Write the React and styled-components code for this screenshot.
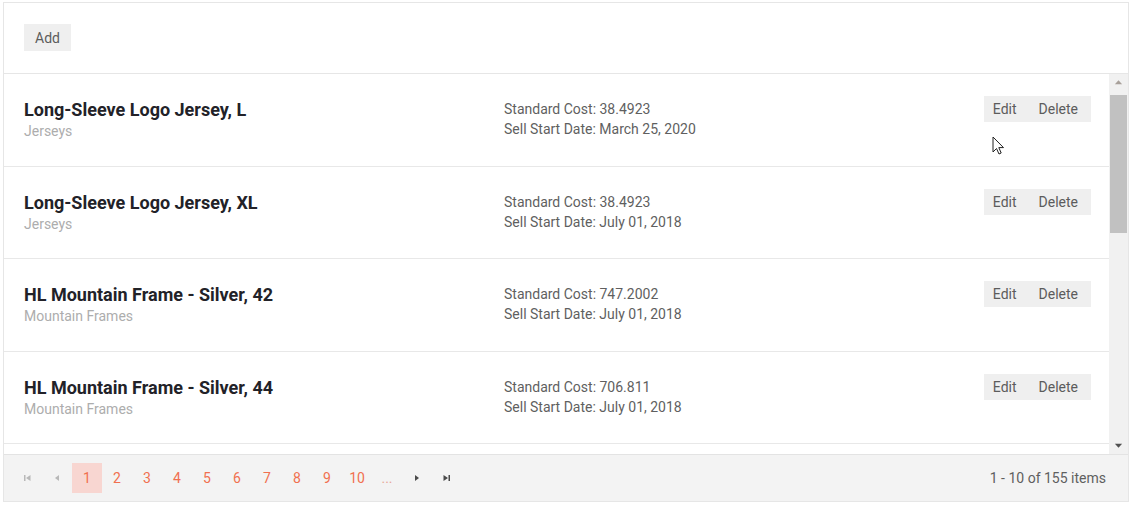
import styled, { createGlobalStyle } from "styled-components";

const GlobalStyle = createGlobalStyle`
  html, body {
    margin: 0;
    background: #ffffff;
    font-family: Roboto, "Liberation Sans", sans-serif;
  }
  * { box-sizing: border-box; }
`

const Frame = styled.div`
  margin: 2px 4px 0 3px;
  width: 1126px;
  height: 500px;
  border: 1px solid #e6e6e6;
  display: flex;
  flex-direction: column;
  background: #fff;
`

const Toolbar = styled.div`
  height: 71px;
  flex: none;
  padding: 21px 20px;
  border-bottom: 1px solid #e6e6e6;
  display: flex;
  align-items: flex-start;
`

const Button = styled.button`
  border: none;
  background: #efefef;
  color: #5c5c5c;
  font-family: Roboto, "Liberation Sans", sans-serif;
  font-size: 14px;
  height: ${props => props.tall ? "27px" : "26px"};
  padding: 0 ${props => props.pad || 8}px;
  cursor: pointer;
  display: flex;
  align-items: center;
`

const ListArea = styled.div`
  position: relative;
  flex: 1;
  min-height: 0;
  display: flex;
`

const Rows = styled.div`
  flex: 1;
  overflow: hidden;
`

const ScrollBar = styled.div`
  width: 19px;
  flex: none;
  background: #f1f1f1;
  display: flex;
  flex-direction: column;
  align-items: center;
`

const ScrollButton = styled.div`
  height: 17px;
  flex: none;
  width: 100%;
  display: flex;
  align-items: center;
  justify-content: center;
  color: ${props => props.dark ? "#505050" : "#a8a09a"};
`

const Thumb = styled.div`
  margin-top: 4px;
  width: 17px;
  height: 138px;
  background: #c1c1c1;
`

const Row = styled.div`
  display: grid;
  grid-template-columns: 480px 1fr auto;
  padding: 25px 18px 25px 20px;
  border-bottom: 1px solid #e8e8e8;
  height: 92.5px;
`

const Name = styled.div`
  font-size: 18px;
  font-weight: 700;
  line-height: 22px;
  color: #222228;
`

const Category = styled.div`
  font-size: 14px;
  line-height: 20px;
  color: #adadad;
`

const Details = styled.div`
  font-size: 14px;
  line-height: 20px;
  color: #5f5f5f;
`

const Actions = styled.div`
  display: flex;
  margin-top: -3px;
`

const Pager = styled.div`
  height: 47px;
  flex: none;
  border-top: 1px solid #e3e3e3;
  background: #f3f3f3;
  display: flex;
  align-items: center;
  padding: 0 22px 0 8px;
`

const PageItem = styled.span`
  width: 30px;
  height: 30px;
  flex: none;
  display: flex;
  align-items: center;
  justify-content: center;
  font-size: 14px;
  color: ${props => props.arrow ? (props.off ? "#b8b8b8" : "#4a4a4a") : props.muted ? "#e8a898" : "#f1704f"};
  background: ${props => props.active ? "#f8d6d1" : "transparent"};
`

const Info = styled.span`
  margin-left: auto;
  font-size: 14px;
  color: #5f5f5f;
`

const Cursor = styled.svg`
  position: absolute;
  left: 988px;
  top: 62px;
`

const items = [
  ["Long-Sleeve Logo Jersey, L", "Jerseys", "38.4923", "March 25, 2020"],
  ["Long-Sleeve Logo Jersey, XL", "Jerseys", "38.4923", "July 01, 2018"],
  ["HL Mountain Frame - Silver, 42", "Mountain Frames", "747.2002", "July 01, 2018"],
  ["HL Mountain Frame - Silver, 44", "Mountain Frames", "706.811", "July 01, 2018"],
  ["HL Mountain Frame - Silver, 48", "Mountain Frames", "706.811", "July 01, 2018"],
];

const Arrow = ({ d, size = 10 }) => (
  <svg width={size} height={size} viewBox="0 0 10 10"><path d={d} fill="currentColor" /></svg>
)

function App() {
  return (
    <>
      <GlobalStyle />
      <Frame>
        <Toolbar>
          <Button tall pad={11}>Add</Button>
        </Toolbar>
        <ListArea>
          <Rows>
            {items.map(([name, cat, cost, date]) => (
              <Row key={name}>
                <div>
                  <Name>{name}</Name>
                  <Category>{cat}</Category>
                </div>
                <Details>
                  <div>Standard Cost: {cost}</div>
                  <div>Sell Start Date: {date}</div>
                </Details>
                <Actions>
                  <Button pad={9}>Edit</Button>
                  <Button pad={13}>Delete</Button>
                </Actions>
              </Row>
            ))}
          </Rows>
          <ScrollBar>
            <ScrollButton><Arrow size={9} d="M1 7h8L5 2.5z" /></ScrollButton>
            <Thumb />
            <div style={{ flex: 1 }} />
            <ScrollButton dark><Arrow size={9} d="M1 3h8L5 7.5z" /></ScrollButton>
          </ScrollBar>
          <Cursor width="14" height="20" viewBox="0 0 14 20">
            <path d="M1 1 L1 16 L4.5 12.5 L7 18 L9.2 17 L6.8 11.6 L11.5 11.6 Z" fill="#fff" stroke="#222" strokeWidth="1" />
          </Cursor>
        </ListArea>
        <Pager>
          <PageItem arrow off><Arrow d="M2 2h1.5v6H2z M8.5 2v6L4 5z" /></PageItem>
          <PageItem arrow off><Arrow d="M7 2v6L3 5z" /></PageItem>
          {[1, 2, 3, 4, 5, 6, 7, 8, 9, 10].map(n => (
            <PageItem key={n} active={n === 1}>{n}</PageItem>
          ))}
          <PageItem muted>...</PageItem>
          <PageItem arrow><Arrow d="M3 2v6l4-3z" /></PageItem>
          <PageItem arrow><Arrow d="M1.5 2v6L6 5z M6.5 2H8v6H6.5z" /></PageItem>
          <Info>1 - 10 of 155 items</Info>
        </Pager>
      </Frame>
    </>
  )
}

export default App;
